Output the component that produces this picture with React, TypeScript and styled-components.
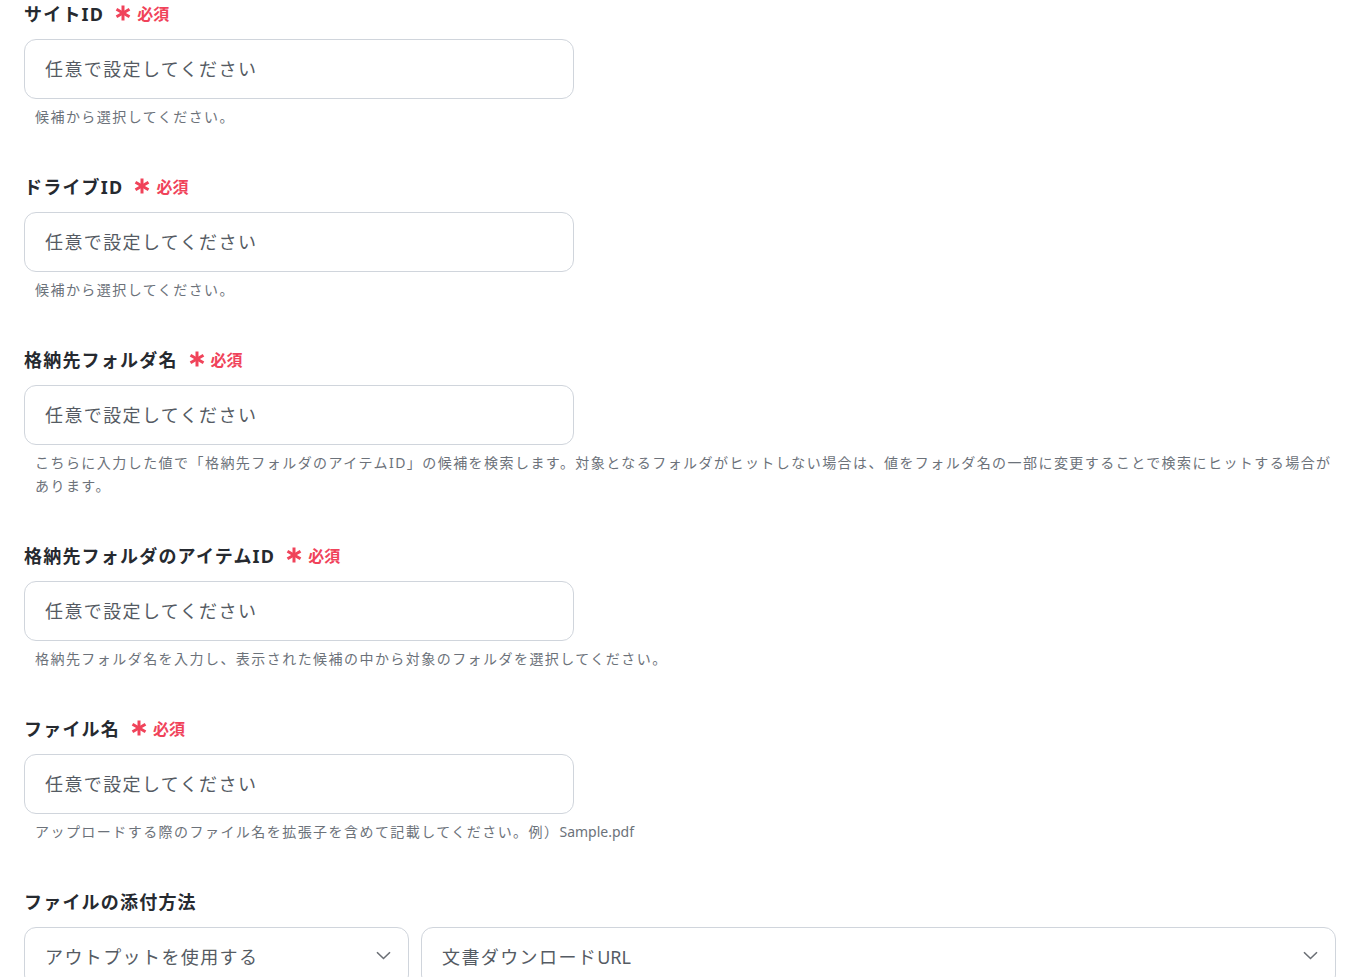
import styled, { createGlobalStyle } from "styled-components";

const GlobalStyle = createGlobalStyle`
  body {
    margin: 0;
    background: #ffffff;
    font-family: "Noto Sans", "Noto Sans CJK JP", sans-serif;
    color: #1f2328;
  }
`

const Page = styled.div`
  padding: 0 12px 0 24px;
  display: flex;
  flex-direction: column;
`

const Field = styled.div`
  display: flex;
  flex-direction: column;
  margin-bottom: 45px;
`

const LabelRow = styled.div`
  display: flex;
  align-items: center;
  gap: 11px;
  height: 25px;
`

const LabelText = styled.span`
  font-size: 18px;
  font-weight: 700;
  letter-spacing: 1.2px;
  color: #262a30;
`

const Required = styled.span`
  display: flex;
  align-items: center;
  gap: 6px;
  font-size: 16px;
  font-weight: 700;
  color: #f0435a;
`

const TextInput = styled.div`
  box-sizing: border-box;
  margin-top: 14px;
  width: 550px;
  height: 60px;
  border: 1px solid #d0d5dc;
  border-radius: 12px;
  padding: 0 20px 3px;
  display: flex;
  align-items: center;
  font-size: 18px;
  letter-spacing: 1.4px;
  color: #555b63;
`

const Help = styled.p`
  margin: 6px 0 0 11px;
  font-size: 14px;
  line-height: 23px;
  letter-spacing: 1.45px;
  color: #6c727a;
`

const Latin = styled.span`
  letter-spacing: 0;
`

const SelectRow = styled.div`
  display: grid;
  grid-template-columns: 385px 1fr;
  gap: 12px;
  margin-top: 14px;
`

const Select = styled.div`
  box-sizing: border-box;
  height: 60px;
  border: 1px solid #d0d5dc;
  border-radius: 12px;
  padding: 0 17px 3px 20px;
  display: flex;
  align-items: center;
  justify-content: space-between;
  font-size: 18px;
  letter-spacing: 1.4px;
  color: #555b63;
`

const Asterisk = () => (
  <svg width="16" height="16" viewBox="0 0 16 16">
    <g stroke="#f0435a" strokeWidth="3" strokeLinecap="butt">
      <line x1="8" y1="0.5" x2="8" y2="15.5" />
      <line x1="1.5" y1="4.25" x2="14.5" y2="11.75" />
      <line x1="1.5" y1="11.75" x2="14.5" y2="4.25" />
    </g>
  </svg>
)

const Chevron = () => (
  <svg width="15" height="9" viewBox="0 0 15 9" fill="none">
    <path d="M1 1.2 L7.5 7.5 L14 1.2" stroke="#6b6f75" strokeWidth="1.6" />
  </svg>
)

const fields = [
  { label: "サイトID", help: <>候補から選択してください。</> },
  { label: "ドライブID", help: <>候補から選択してください。</> },
  {
    label: "格納先フォルダ名",
    help: (
      <>
        こちらに入力した値で「格納先フォルダのアイテムID」の候補を検索します。対象となるフォルダがヒットしない場合は、値をフォルダ名の一部に変更することで検索にヒットする場合があります。
      </>
    ),
  },
  {
    label: "格納先フォルダのアイテムID",
    help: <>格納先フォルダ名を入力し、表示された候補の中から対象のフォルダを選択してください。</>,
  },
  {
    label: "ファイル名",
    help: (
      <>
        アップロードする際のファイル名を拡張子を含めて記載してください。例）<Latin>Sample.pdf</Latin>
      </>
    ),
  },
]

const App = () => {
  return (
    <Page>
      <GlobalStyle />
      {fields.map((field, index) => (
        <Field key={index}>
          <LabelRow>
            <LabelText>{field.label}</LabelText>
            <Required>
              <Asterisk />
              必須
            </Required>
          </LabelRow>
          <TextInput>任意で設定してください</TextInput>
          <Help>{field.help}</Help>
        </Field>
      ))}
      <Field>
        <LabelRow>
          <LabelText>ファイルの添付方法</LabelText>
        </LabelRow>
        <SelectRow>
          <Select>
            <span>アウトプットを使用する</span>
            <Chevron />
          </Select>
          <Select>
            <span>
              文書ダウンロード<Latin>URL</Latin>
            </span>
            <Chevron />
          </Select>
        </SelectRow>
      </Field>
    </Page>
  )
}

export default App;
